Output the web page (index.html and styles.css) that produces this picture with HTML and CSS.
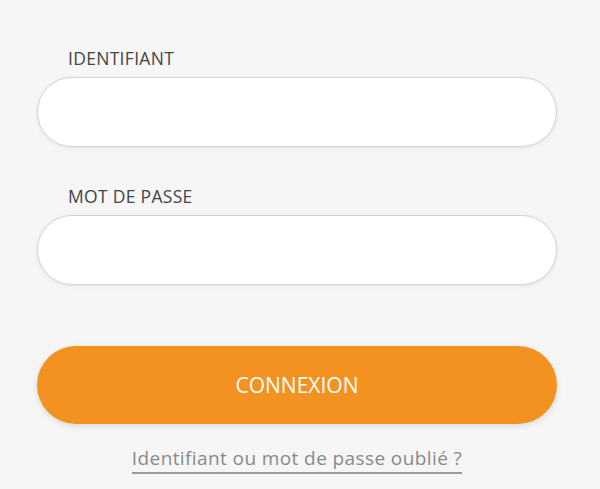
FILE: index.html
```html
<!DOCTYPE html>
<html lang="fr">

<head>
    <meta charset="UTF-8">
    <meta name="viewport" content="width=device-width, initial-scale=1.0">
    <title>Connexion</title>
    <link rel="stylesheet" href="styles.css">
</head>

<body>
    <form class="login-form" onsubmit="return false">
        <div class="field">
            <label class="field-label" for="login">IDENTIFIANT</label>
            <input class="field-input" id="login" type="text">
        </div>
        <div class="field">
            <label class="field-label" for="pass">MOT DE PASSE</label>
            <input class="field-input" id="pass" type="password">
        </div>
        <button class="btn-login" type="submit">CONNEXION</button>
        <div class="forgot">
            <a href="#">Identifiant ou mot de passe oublié ?</a>
        </div>
    </form>
</body>

</html>
```

FILE: styles.css
```css
html,
body {
    margin: 0;
    background: #f6f6f6;
    font-family: "Open Sans", "Noto Sans", sans-serif;
}

.login-form {
    width: 520px;
    margin-left: 37px;
    padding-top: 47px;
}

.field {
    display: flex;
    flex-direction: column;
    margin-bottom: 38px;
}

.field-label {
    color: #444;
    font-size: 17.5px;
    letter-spacing: 0.3px;
    line-height: 22px;
    padding-left: 31px;
    margin-bottom: 8px;
}

.field-input {
    box-sizing: border-box;
    height: 70px;
    border: 1px solid #d4d4d4;
    border-radius: 35px;
    background: #fff;
    box-shadow: 0 1px 4px rgba(0, 0, 0, 0.08);
    padding: 0 30px;
    font-size: 16px;
    outline: none;
}

.field + .field {
    margin-bottom: 61px;
}

.btn-login {
    display: block;
    width: 520px;
    height: 78px;
    border: none;
    border-radius: 39px;
    background: #f39220;
    color: #fff;
    font-family: inherit;
    font-size: 21px;
    box-shadow: 0 2px 6px rgba(0, 0, 0, 0.12);
    cursor: pointer;
}

.forgot {
    text-align: center;
    margin-top: 22px;
    line-height: 24px;
}

.forgot a {
    display: inline-block;
    color: #8a8a8a;
    font-size: 19px;
    letter-spacing: 0.4px;
    text-decoration: none;
    border-bottom: 2px solid #9a9a9a;
    padding-bottom: 2px;
}
```
